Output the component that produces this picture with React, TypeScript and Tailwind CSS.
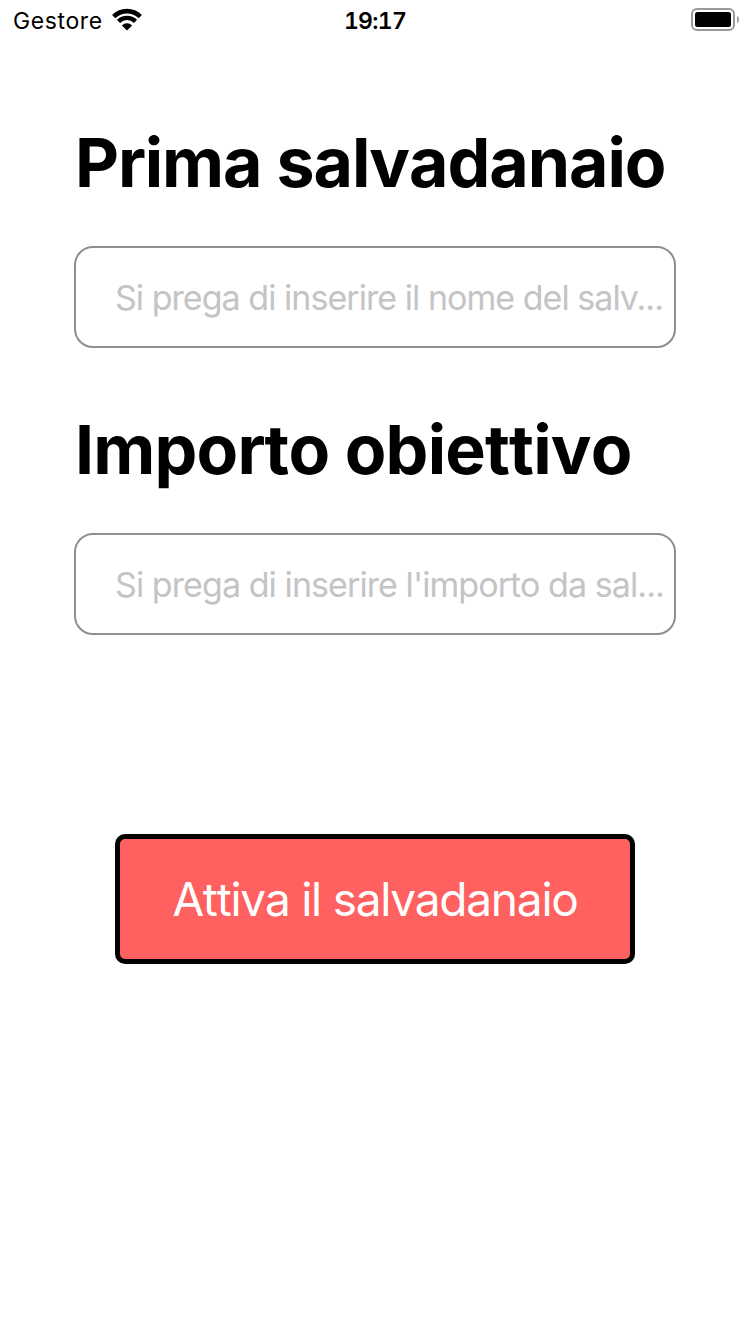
import React from "react";

function WifiIcon() {
  return (
    <svg className="ml-[8px] h-[24px] w-[32px]" viewBox="0 0 32 24" fill="none">
      <path d="M2.700 8.600A19 19 0 0 1 29.300 8.600" stroke="#000" strokeWidth="4.600" />
      <path d="M7.500 13.400A12.100 12.100 0 0 1 24.500 13.400" stroke="#000" strokeWidth="4.400" />
      <path d="M10.900 17.400A7 7 0 0 1 21.100 17.400L16 22.500Z" fill="#000" />
    </svg>
  );
}

function BatteryIcon() {
  return (
    <svg className="h-[24px] w-[50px]" viewBox="0 0 50 24" fill="none">
      <rect x="1" y="1" width="42" height="21" rx="5" stroke="#999" strokeWidth="2" />
      <rect x="4" y="4" width="36" height="15" rx="2.500" fill="#000" />
      <path d="M46 8C48.700 9 48.700 14 46 15Z" fill="#999" />
    </svg>
  );
}

function StatusBar() {
  return (
    <header className="grid h-[40px] grid-cols-3 items-center">
      <div className="flex items-center pl-[13px]">
        <span className="pt-[2px] text-[23px] leading-[38px] tracking-[0.600px]">Gestore</span>
        <WifiIcon />
      </div>
      <span className="pt-[2px] text-center text-[23px] font-semibold leading-[38px] tracking-[-0.700px] tabular-nums">19:17</span>
      <div className="flex justify-end pr-[9px]">
        <BatteryIcon />
      </div>
    </header>
  );
}

function Field({ title, placeholder, titleClass, textClass }: { title: string; placeholder: string; titleClass: string; textClass: string }) {
  return (
    <section className="h-[287px]">
      <h1 className={`h-[84px] whitespace-nowrap pl-px text-[68px] font-bold leading-[84px] [font-kerning:none] ${titleClass}`}>{title}</h1>
      <div className="mt-[42px] flex h-[102px] items-center rounded-[19px] border-2 border-[#8e8e93] pl-[39px]">
        <span className={`whitespace-nowrap text-[34px] text-[#c4c4c6] ${textClass}`}>{placeholder}</span>
      </div>
    </section>
  );
}

export default function App() {
  return (
    <div className="flex h-[1334px] w-[750px] flex-col overflow-hidden bg-white font-['Inter',sans-serif] text-black">
      <StatusBar />
      <main className="px-[74px] pt-[80px]">
        <Field title="Prima salvadanaio" placeholder="Si prega di inserire il nome del salv..." titleClass="tracking-[-1.050px]" textClass="tracking-[-0.960px]" />
        <Field title="Importo obiettivo" placeholder="Si prega di inserire l'importo da sal..." titleClass="tracking-[-0.800px]" textClass="tracking-[-0.920px]" />
        <button className="mx-auto mt-[140px] flex h-[130px] w-[520px] items-center justify-center rounded-[10px] border-[5px] border-black bg-[#ff6060] text-[46px] tracking-[-1.250px] text-white [font-kerning:none]">
          Attiva il salvadanaio
        </button>
      </main>
    </div>
  );
}
